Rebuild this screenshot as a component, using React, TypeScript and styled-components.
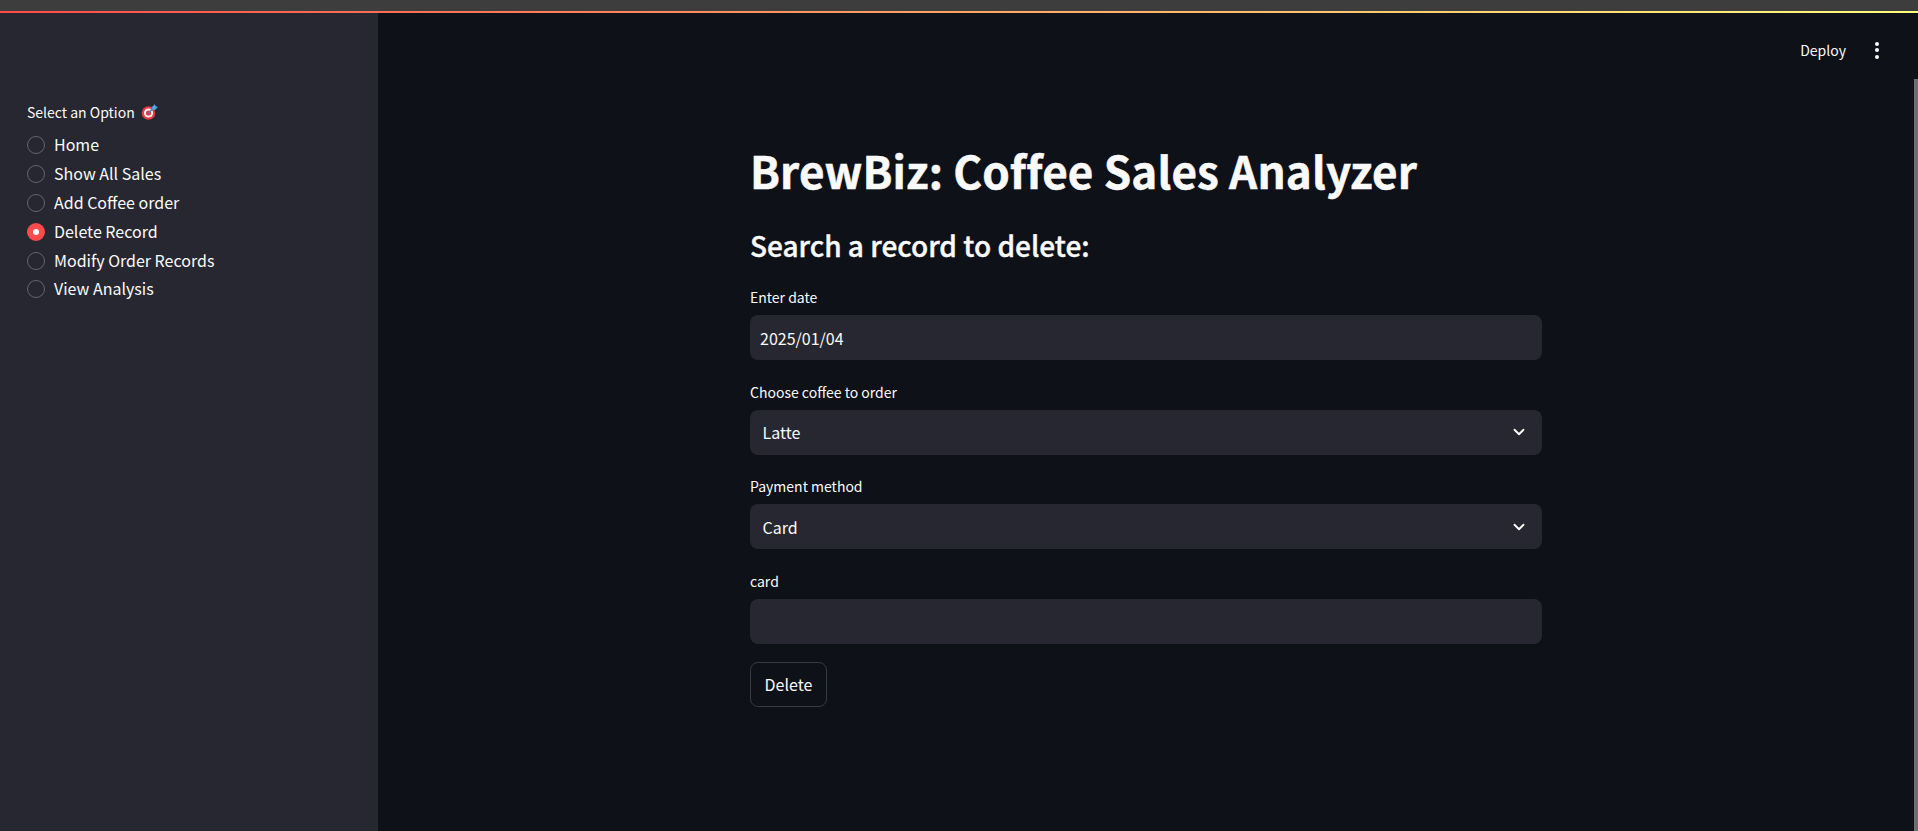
import { createGlobalStyle, styled } from 'styled-components';
import { ChevronDown } from 'lucide-react';

const GlobalStyle = createGlobalStyle`
  html, body {
    margin: 0;
    padding: 0;
    height: 100%;
    overflow: hidden;
    background: #0e1117;
  }
  * { box-sizing: border-box; }
`;

const Page = styled.div`
  position: relative;
  width: 1918px;
  height: 831px;
  display: flex;
  flex-direction: column;
  overflow: hidden;
  color: #fafafa;
  font-family: "Noto Sans CJK SC", "Noto Sans", sans-serif;
`;

const WindowStrip = styled.div`
  height: 11px;
  background: #3d3d3d;
  flex: none;
`;

const Decoration = styled.div`
  height: 2px;
  flex: none;
  background: linear-gradient(90deg, #ff4b4b, #fffd80);
`;

const Body = styled.div`
  flex: 1;
  display: flex;
  min-height: 0;
`;

const Sidebar = styled.aside`
  width: 378px;
  flex: none;
  background: #262730;
  padding: 89px 27px 0;
`;

const RadioLabel = styled.div`
  display: flex;
  align-items: center;
  gap: 6px;
  height: 20px;
  font-size: 14px;
  line-height: 20px;
  margin-bottom: 7.5px;
`;

const RadioRow = styled.div`
  display: flex;
  align-items: center;
  gap: 9px;
  height: 28.9px;
  font-size: 16px;
`;

const RadioDot = styled.span<{ $checked?: boolean }>`
  width: 18px;
  height: 18px;
  margin-top: 2px;
  border-radius: 50%;
  flex: none;
  display: flex;
  align-items: center;
  justify-content: center;
  background: ${(p) => (p.$checked ? '#ff4b4b' : 'transparent')};
  border: ${(p) => (p.$checked ? 'none' : '1.5px solid #63646c')};
  &::after {
    content: '';
    display: ${(p) => (p.$checked ? 'block' : 'none')};
    width: 6px;
    height: 6px;
    border-radius: 50%;
    background: #fff;
  }
`;

const Main = styled.main`
  flex: 1;
  min-width: 0;
  display: flex;
  flex-direction: column;
`;

const Toolbar = styled.header`
  height: 76px;
  display: flex;
  align-items: center;
  justify-content: flex-end;
  gap: 29px;
  padding: 0 39px 2px 0;
  font-size: 14px;
  flex: none;
`;

const MenuDots = styled.span`
  width: 4px;
  display: flex;
  flex-direction: column;
  gap: 2.5px;
  i {
    display: block;
    width: 4px;
    height: 4px;
    border-radius: 50%;
    background: #fafafa;
  }
`;

const Column = styled.div`
  width: 792px;
  margin-left: 372px;
  padding-top: 55px;
`;

const Title = styled.h1`
  margin: 0;
  font-size: 44px;
  line-height: 52px;
  font-weight: 700;
  letter-spacing: 0.13px;
  -webkit-text-stroke: 0.5px #fafafa;
`;

const Subtitle = styled.h3`
  margin: 31px 0 0;
  padding-bottom: 2.6px;
  font-size: 28px;
  line-height: 36px;
  font-weight: 500;
  -webkit-text-stroke: 0.4px #fafafa;
`;

const Field = styled.div`
  margin-top: 21.5px;
`;

const FieldLabel = styled.label`
  display: block;
  font-size: 14px;
  line-height: 20px;
  margin-bottom: 8px;
`;

const InputBox = styled.div<{ $select?: boolean }>`
  height: 45px;
  border-radius: 8px;
  background: #262730;
  display: flex;
  align-items: center;
  justify-content: space-between;
  padding: 0 14px 0 ${(p) => (p.$select ? '12.5px' : '10px')};
  font-size: 16px;
`;

const DeleteButton = styled.button`
  display: block;
  margin-top: 18px;
  width: 77px;
  height: 45px;
  border-radius: 8px;
  border: 1px solid #393b44;
  background: #0e1117;
  color: #fafafa;
  font: inherit;
  font-size: 16px;
  padding: 0;
`;

const Scrollbar = styled.div`
  position: absolute;
  right: 0;
  top: 79px;
  bottom: 0;
  width: 4px;
  background: #6e6e72;
`;

const DartEmoji = () => (
  <svg width="17" height="16" viewBox="0 0 17 16" aria-hidden="true">
    <circle cx="7.5" cy="9" r="6.8" fill="#ea3a44" />
    <circle cx="7.5" cy="9" r="4.6" fill="#f6f2f0" />
    <circle cx="7.5" cy="9" r="2.6" fill="#ea3a44" />
    <path d="M7.5 9 13 3.5" stroke="#3b88c3" strokeWidth="1.6" />
    <path d="M11 3 13.8 0.2l0.9 2 2.1 0.9-2.8 2.8-2.6-.4z" fill="#4fa8ea" />
  </svg>
);

const options = ['Home', 'Show All Sales', 'Add Coffee order', 'Delete Record', 'Modify Order Records', 'View Analysis'];

export default function App() {
  return (
    <Page>
      <GlobalStyle />
      <WindowStrip />
      <Decoration />
      <Body>
        <Sidebar>
          <RadioLabel>
            Select an Option <DartEmoji />
          </RadioLabel>
          {options.map((option) => (
            <RadioRow key={option}>
              <RadioDot $checked={option === 'Delete Record'} />
              {option}
            </RadioRow>
          ))}
        </Sidebar>
        <Main>
          <Toolbar>
            <span>Deploy</span>
            <MenuDots>
              <i />
              <i />
              <i />
            </MenuDots>
          </Toolbar>
          <Column>
            <Title>BrewBiz: Coffee Sales Analyzer</Title>
            <Subtitle>Search a record to delete:</Subtitle>
            <Field>
              <FieldLabel>Enter date</FieldLabel>
              <InputBox>2025/01/04</InputBox>
            </Field>
            <Field>
              <FieldLabel>Choose coffee to order</FieldLabel>
              <InputBox $select>
                Latte
                <ChevronDown size={18} strokeWidth={2.5} />
              </InputBox>
            </Field>
            <Field>
              <FieldLabel>Payment method</FieldLabel>
              <InputBox $select>
                Card
                <ChevronDown size={18} strokeWidth={2.5} />
              </InputBox>
            </Field>
            <Field>
              <FieldLabel>card</FieldLabel>
              <InputBox />
            </Field>
            <DeleteButton>Delete</DeleteButton>
          </Column>
        </Main>
      </Body>
      <Scrollbar />
    </Page>
  );
}
